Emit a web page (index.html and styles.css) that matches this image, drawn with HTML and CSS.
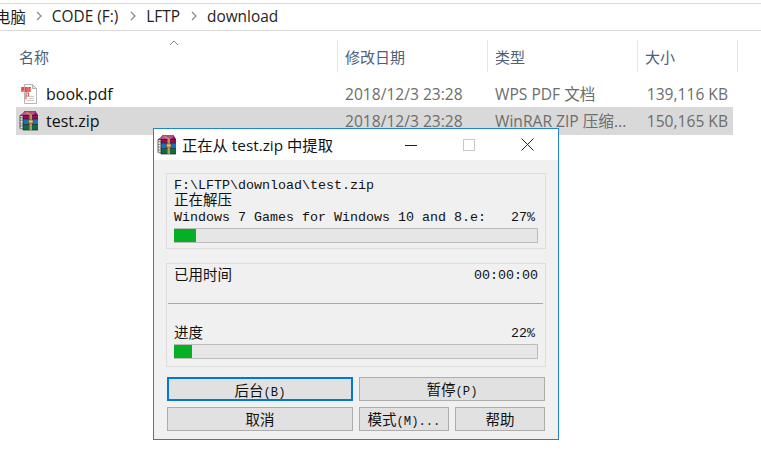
FILE: index.html
```html
<!DOCTYPE html>
<html lang="zh-CN">
<head>
    <meta charset="UTF-8">
    <meta name="viewport" content="width=device-width, initial-scale=1.0">
    <title>正在从 test.zip 中提取</title>
    <link rel="stylesheet" href="styles.css">
</head>
<body>
    <svg class="defs" width="0" height="0">
        <symbol id="rar" viewBox="0 0 20 20">
            <!-- bottom book -->
            <path d="M1 15l3-1.500h15v5.500H4l-3-1.500z" fill="#0d6e3c"/>
            <path d="M1 15l3-1.500V19l-3-1.500z" fill="#e4e8e2"/>
            <!-- middle book -->
            <path d="M1 9.500L4 8h15v5.500H4L1 12z" fill="#1770c0"/>
            <path d="M1 9.500L4 8v5.500L1 12z" fill="#eef1f3"/>
            <!-- top book -->
            <path d="M1 4.500L5 1h12l2 3v4H4L1 6z" fill="#8c1259"/>
            <path d="M1 4.500L5 1h12l-3 3H4z" fill="#c0508f"/>
            <path d="M1 4.500L4 4v4L1 6z" fill="#f0e8ec"/>
            <!-- outlines -->
            <path d="M5 .6h12M1 4.500h18M4 8h15M4 13.500h15M4 19h15M4 4v15M1 4.500v13" fill="none" stroke="#1c1c1c" stroke-width=".7"/>
            <path d="M1 6.500h3M1 9.500h3M1 12h3M1 15h3M1 17.500h3" stroke="#555" stroke-width=".5"/>
            <!-- belt -->
            <path d="M6 1l4.500 3v15H13V4L8.500 1z" fill="#bd9650"/>
            <rect x="9.500" y="9" width="4.500" height="3" fill="#e6c77a" stroke="#4d3a16" stroke-width=".5"/>
        </symbol>
    </svg>

    <div class="path-bar">
        <span class="crumb clip">电脑</span>
        <svg class="chev" width="6" height="10" viewBox="0 0 6 10"><path d="M1 1l4 4-4 4" fill="none" stroke="#8a8a8a" stroke-width="1.3"/></svg>
        <span class="crumb">CODE (F:)</span>
        <svg class="chev" width="6" height="10" viewBox="0 0 6 10"><path d="M1 1l4 4-4 4" fill="none" stroke="#8a8a8a" stroke-width="1.3"/></svg>
        <span class="crumb">LFTP</span>
        <svg class="chev" width="6" height="10" viewBox="0 0 6 10"><path d="M1 1l4 4-4 4" fill="none" stroke="#8a8a8a" stroke-width="1.3"/></svg>
        <span class="crumb">download</span>
    </div>

    <div class="file-list">
        <div class="head cols">
            <div class="col-name">名称
                <svg class="sort" width="10" height="6" viewBox="0 0 10 6"><path d="M1 5l4-4 4 4" fill="none" stroke="#8a8a8a"/></svg>
            </div>
            <div>修改日期</div>
            <div>类型</div>
            <div>大小</div>
        </div>
        <div class="row cols">
            <div class="file-name">
                <svg class="file-icon" width="20" height="20" viewBox="0 0 20 20">
                    <path d="M5.500 .5h8l4 4v15h-12z" fill="#fff" stroke="#b4b4b4"/>
                    <path d="M13.500 .5v4h4z" fill="#e8e8e8" stroke="#b4b4b4"/>
                    <path d="M10 12.500h5M10 14.500h5M8 16.500h7" stroke="#c8c8c8"/>
                    <rect x="2" y="3" width="10" height="5" fill="#ec8a80"/>
                    <path d="M3 3.500v4M3 3.500h1.500v2H3M6.500 3.500v4M6.500 3.500h1.500v4H6.500M10 3.500v4M10 3.500h1.500" fill="none" stroke="#d6362a" stroke-width=".8"/>
                    <path d="M7 8.500v7M7 9h2.500v3H7" fill="none" stroke="#e2574c" stroke-width="1.100"/>
                </svg>
                book.pdf
            </div>
            <div>2018/12/3 23:28</div>
            <div>WPS PDF 文档</div>
            <div class="size">139,116 KB</div>
        </div>
        <div class="row cols selected">
            <div class="file-name">
                <svg class="file-icon" width="20" height="20"><use href="#rar"/></svg>
                test.zip
            </div>
            <div>2018/12/3 23:28</div>
            <div>WinRAR ZIP 压缩...</div>
            <div class="size">150,165 KB</div>
        </div>
    </div>

    <div class="dialog">
        <div class="title-bar">
            <svg class="title-icon" width="20" height="20"><use href="#rar"/></svg>
            <span class="title-text">正在从 test.zip 中提取</span>
            <div class="win-btns">
                <svg width="12" height="12" viewBox="0 0 12 12"><path d="M0 6.500h12" stroke="#222"/></svg>
                <svg width="12" height="12" viewBox="0 0 12 12"><rect x=".5" y=".5" width="11" height="11" fill="none" stroke="#c8c8c8"/></svg>
                <svg width="13" height="13" viewBox="0 0 13 13"><path d="M.5 .5l12 12M12.500 .5l-12 12" stroke="#222"/></svg>
            </div>
        </div>
        <div class="dialog-body">
            <div class="group group-top">
                <div class="line">F:\LFTP\download\test.zip</div>
                <div class="line cn">正在解压</div>
                <div class="line spread inset"><span>Windows 7 Games for Windows 10 and 8.e:</span><span>27%</span></div>
                <div class="bar"><div class="fill" style="width: 6%"></div></div>
            </div>
            <div class="group group-bottom">
                <div class="line spread time"><span class="cn">已用时间</span><span class="value">00:00:00</span></div>
                <div class="divider"></div>
                <div class="line spread progress inset"><span class="cn">进度</span><span class="value">22%</span></div>
                <div class="bar"><div class="fill" style="width: 5%"></div></div>
            </div>
            <div class="buttons">
                <button class="btn wide focus"><span>后台</span>(B)</button>
                <button class="btn wide"><span>暂停</span>(P)</button>
                <button class="btn wide"><span>取消</span></button>
                <button class="btn"><span>模式</span>(M)...</button>
                <button class="btn"><span>帮助</span></button>
            </div>
        </div>
    </div>
</body>
</html>
```

FILE: styles.css
```css
body {
    margin: 0;
    width: 761px;
    height: 465px;
    overflow: hidden;
    background-color: #fff;
    font-family: "Open Sans", "Noto Sans CJK SC", sans-serif;
    position: relative;
}
.defs {
    display: block;
    height: 0;
}
.path-bar {
    margin-top: 3px;
    height: 24px;
    padding-bottom: 2px;
    border-top: 1px solid #d9d9d9;
    border-bottom: 1px solid #d9d9d9;
    display: flex;
    align-items: center;
    font-size: 15.4px;
    color: #1e1e1e;
    white-space: nowrap;
}
.crumb.clip {
    margin-left: -5px;
    margin-right: 10px;
}
.chev {
    margin-right: 10px;
}
.crumb {
    margin-right: 12px;
}
.crumb:nth-of-type(3) {
    margin-right: 11px;
}
.file-list {
    padding-left: 16px;
}
.cols {
    display: grid;
    grid-template-columns: 322px 150px 150px 100px;
}
.head {
    margin-top: 9px;
    height: 32px;
    font-size: 15px;
    color: #4c607a;
}
.head > div {
    border-right: 1px solid #e5e5e5;
    padding: 7px 0 0 7px;
    line-height: 20px;
    position: relative;
}
.head .col-name {
    padding-left: 3px;
}
.sort {
    position: absolute;
    left: 153px;
    top: 0;
}
.row {
    height: 28px;
    width: 717px;
    line-height: 28px;
    font-size: 15.6px;
    color: #6d6d6d;
    white-space: nowrap;
}
.head + .row {
    margin-top: 8px;
    height: 27px;
}
.row > div {
    padding-left: 7px;
}
.row .size {
    padding-left: 0;
    text-align: right;
    padding-right: 5px;
    width: 90px;
}
.selected {
    background-color: #d9d9d9;
}
.row .file-name {
    display: flex;
    align-items: center;
    gap: 7px;
    padding-left: 3px;
    color: #111;
    font-size: 16px;
}
.file-icon {
    flex: none;
}
.dialog {
    position: absolute;
    left: 153px;
    top: 128px;
    width: 404px;
    height: 310px;
    border: 1px solid #1f83d2;
    background-color: #f0f0f0;
    display: flex;
    flex-direction: column;
}
.title-bar {
    height: 31px;
    background-color: #fff;
    display: flex;
    align-items: center;
    padding-left: 3px;
    flex: none;
}
.title-icon {
    margin-right: 5px;
}
.title-text {
    font-size: 15.3px;
    color: #111;
    margin-bottom: 2px;
}
.win-btns {
    margin-left: auto;
    display: flex;
    align-items: center;
    gap: 46px;
    padding-right: 24px;
}
.dialog-body {
    padding: 13px 12px 0 12px;
    font-family: "Liberation Mono", "Noto Sans CJK SC", monospace;
    font-size: 13.33px;
    color: #111;
}
.group {
    border: 1px solid #dcdcdc;
    padding: 0 7px;
}
.group-top {
    height: 76px;
    padding-top: 5px;
    box-sizing: border-box;
    margin-bottom: 14px;
}
.group-bottom {
    height: 104px;
    box-sizing: border-box;
    padding-top: 2px;
    margin-bottom: 10px;
}
.line {
    height: 13px;
    line-height: 13px;
    white-space: pre;
}
.cn {
    font-family: "Noto Sans CJK SC", sans-serif;
    font-size: 14.5px;
}
.spread {
    display: flex;
    justify-content: space-between;
}
.inset {
    padding-right: 3px;
}
.group-top .spread {
    margin-top: 6px;
}
.value {
    padding-top: 2px;
}
.bar {
    height: 15px;
    box-sizing: border-box;
    margin-top: 4px;
    background-color: #e6e6e6;
    border: 1px solid #bcbcbc;
    border-left: none;
}
.fill {
    height: 100%;
    background-color: #06b025;
}
.time {
    height: 16px;
    line-height: 16px;
}
.divider {
    margin: 21px -5px 0 -6px;
    border-top: 1px solid #a8a8a8;
}
.progress {
    margin-top: 20px;
    height: 16px;
    line-height: 16px;
}
.buttons {
    display: grid;
    grid-template-columns: repeat(4, 90px);
    column-gap: 6px;
    row-gap: 6px;
    margin-left: 1px;
    width: 378px;
}
.btn {
    height: 24px;
    padding: 0 0 3px;
    box-sizing: border-box;
    border: 1px solid #adadad;
    background-color: #e1e1e1;
    font-family: "Liberation Mono", "Noto Sans CJK SC", monospace;
    font-size: 12.2px;
    color: #111;
}
.btn span {
    font-family: "Noto Sans CJK SC", sans-serif;
    font-size: 14.5px;
}
.wide {
    grid-column: span 2;
}
.focus {
    border: 2px solid #0078d7;
}
```
